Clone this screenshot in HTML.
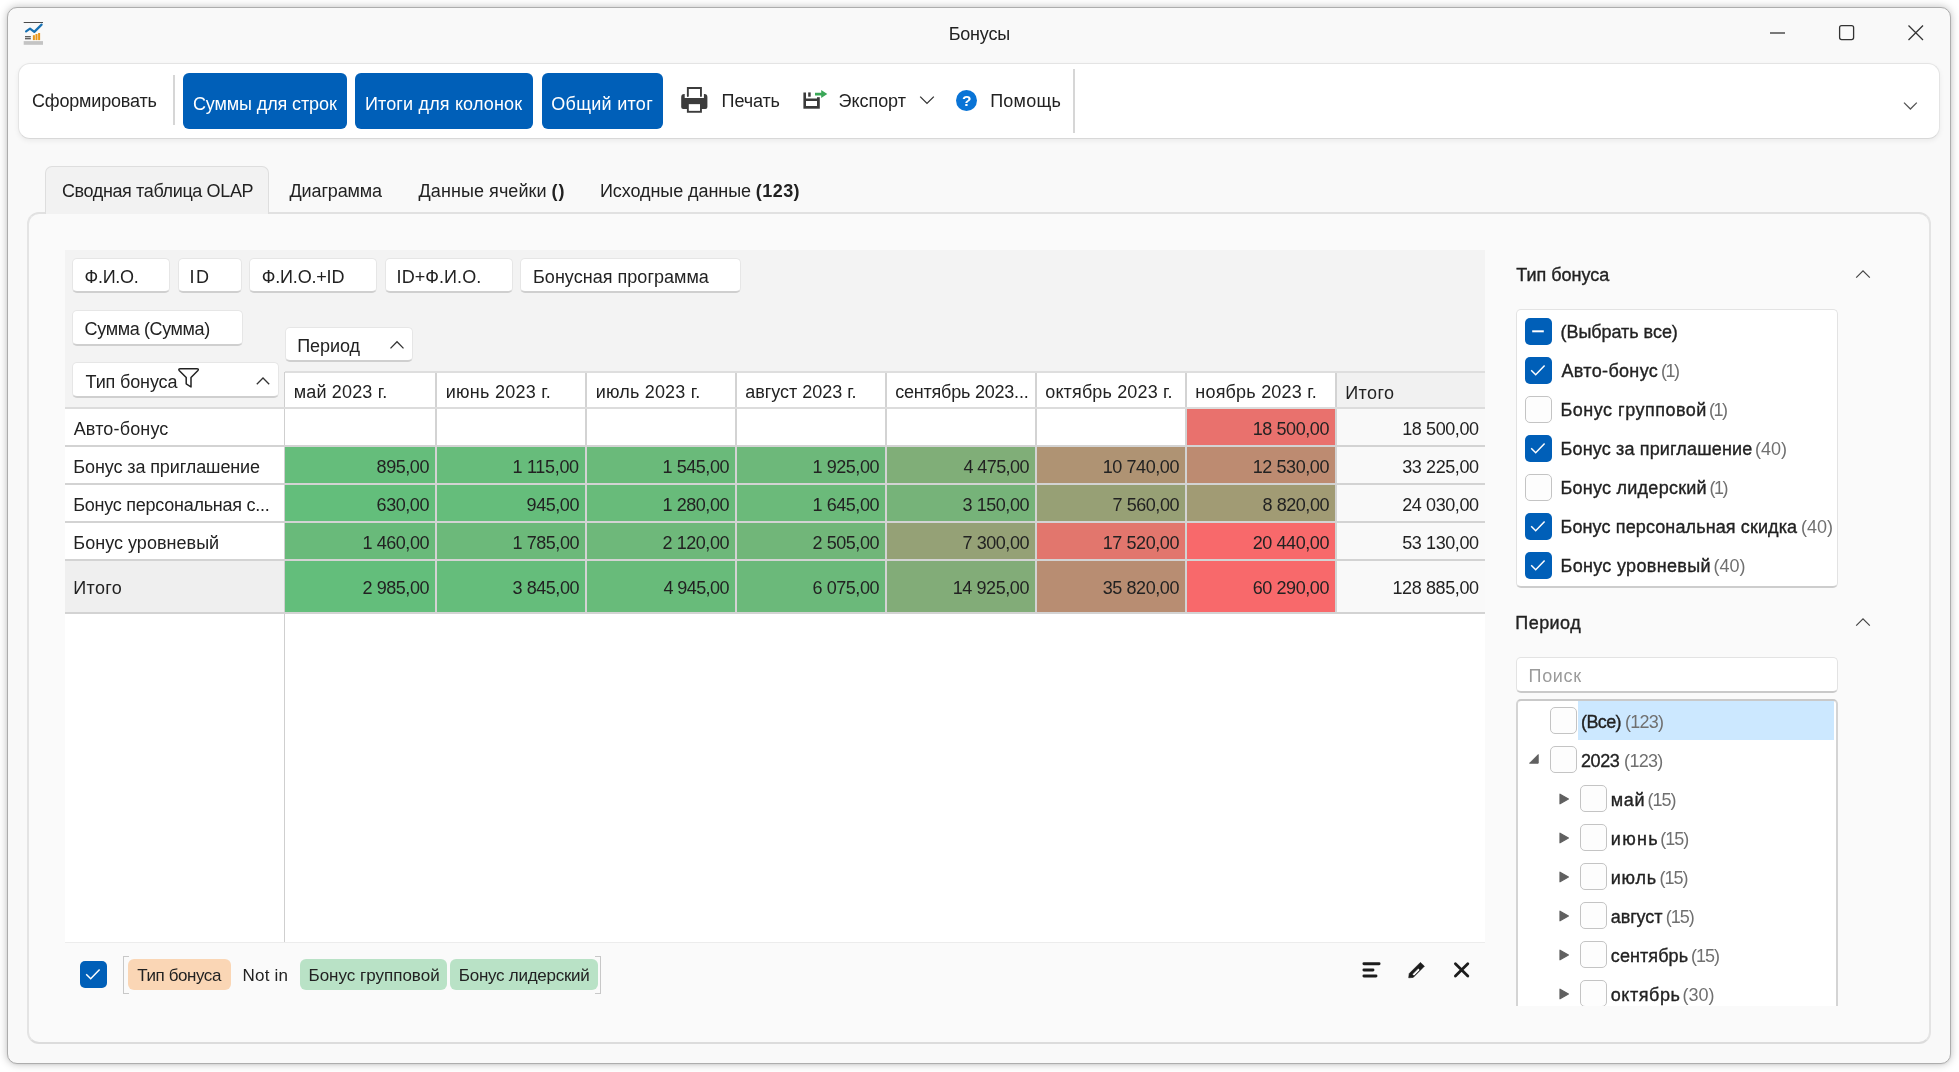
<!DOCTYPE html>
<html lang="ru">
<head>
<meta charset="utf-8">
<title>Бонусы</title>
<style>
html,body{margin:0;padding:0;}
body{width:1959px;height:1072px;background:#ffffff;position:relative;overflow:hidden;font-family:"Liberation Sans",sans-serif;}
div,span,svg{box-sizing:border-box;}
.t{position:absolute;white-space:pre;line-height:24px;height:24px;font-size:18px;color:#222;font-family:"Liberation Sans",sans-serif;}
#tx{position:absolute;left:0;top:0;width:1959px;height:1072px;will-change:transform;}
.chip{position:absolute;background:#fff;border:1px solid #e6e6e6;border-bottom:2px solid #cfcfcf;border-radius:5px;}
.cb{position:absolute;border-radius:5px;}
.cb.on{background:#005fb8;}
.cb.off{background:#fdfdfd;border:1px solid #c4c4c4;}
svg{position:absolute;overflow:visible;}
</style>
</head>
<body>
<div style="position:absolute;left:7px;top:7px;width:1944px;height:1057px;background:#f9f9f9;border:1px solid #adadad;border-radius:10px;box-shadow:0 0 9px rgba(0,0,0,.26),0 1px 2px rgba(0,0,0,.04);"></div>
<svg style="left:23px;top:21px" width="21" height="24" viewBox="0 0 21 24">
<rect x="0.7" y="1" width="19.3" height="1" fill="#4a4a4a"/>
<path d="M3.1 10.4 L7 7.7 L11.3 10.9 L18.6 3.6" fill="none" stroke="#1872b4" stroke-width="2.2" stroke-linecap="round" stroke-linejoin="round"/>
<rect x="2" y="15.2" width="5.8" height="1.1" fill="#3c3c3c"/><rect x="2" y="17.2" width="5.8" height="1.1" fill="#3c3c3c"/>
<rect x="9.9" y="14.2" width="2" height="4.9" fill="#e8971c"/><rect x="12.5" y="13" width="2" height="6.1" fill="#e8971c"/><rect x="15.1" y="12" width="2" height="7.1" fill="#e8971c"/>
<rect x="0.7" y="20.1" width="19.3" height="3.7" fill="#c4c4c4"/>
</svg>
<svg style="left:1765px;top:20px" width="170" height="26" viewBox="0 0 170 26"><g fill="none" stroke="#333" stroke-width="1.3"><path d="M5 13 H20"/><rect x="74.6" y="5.6" width="14" height="14" rx="2"/><path d="M143.5 5.5 L158 20 M158 5.5 L143.5 20"/></g></svg>
<div style="position:absolute;left:18px;top:63px;width:1922px;height:76px;background:#fff;border:1px solid #e4e4e4;border-bottom-color:#d8d8d8;border-radius:12px;box-shadow:0 2px 5px rgba(0,0,0,.06);"></div>
<div style="position:absolute;left:173px;top:75px;width:2px;height:50px;background:#d6d6d6;"></div>
<div style="position:absolute;left:183px;top:73px;width:164px;height:55.5px;background:#005fb8;border-radius:6px;"></div>
<div style="position:absolute;left:355px;top:73px;width:178px;height:55.5px;background:#005fb8;border-radius:6px;"></div>
<div style="position:absolute;left:541.5px;top:73px;width:121.5px;height:55.5px;background:#005fb8;border-radius:6px;"></div>
<svg style="left:681px;top:87px" width="27" height="26" viewBox="0 0 27 26">
<path d="M0.2 10 Q0.2 7.1 3.2 7.1 H3.7 V11.1 H22.9 V7.1 H23.4 Q26.4 7.1 26.4 10 V19.9 Q26.4 21.9 24.4 21.9 H2.2 Q0.2 21.9 0.2 19.9 Z" fill="#3c3c3c"/>
<path d="M6.85 9 V1 H19.95 V9" fill="none" stroke="#3c3c3c" stroke-width="1.9" stroke-linecap="round"/>
<rect x="6.85" y="16.2" width="13.1" height="8.6" fill="#fff" stroke="#3c3c3c" stroke-width="1.9"/>
</svg>
<svg style="left:803px;top:89px" width="26" height="21" viewBox="0 0 26 21">
<path d="M0.4 3.5 H16.8 V19.7 H0.4 Z" fill="#3a3a3a"/>
<rect x="3" y="3" width="11" height="6.5" fill="#fff"/><rect x="14" y="3" width="4" height="5.2" fill="#fff"/>
<rect x="5.2" y="3.4" width="2.5" height="4.3" fill="#3a3a3a"/>
<rect x="3" y="12" width="11" height="5" fill="#fff"/>
<path d="M12 3.7 H18.2 V0.9 L24.3 5 L18.2 9.1 V6.4 H12 Z" fill="#3aa757"/>
</svg>
<svg style="left:919px;top:95px" width="16" height="10" viewBox="0 0 16 10"><path d="M1.2 1.6 L8 8.4 L14.8 1.6" fill="none" stroke="#333" stroke-width="1.3"/></svg>
<div style="position:absolute;left:956px;top:89.5px;width:21px;height:21px;background:#0a74d6;border-radius:50%;"></div>
<div style="position:absolute;left:1073px;top:69px;width:2px;height:64px;background:#d6d6d6;"></div>
<svg style="left:1903px;top:101px" width="15" height="10" viewBox="0 0 15 10"><path d="M1 1.6 L7.4 8 L13.8 1.6" fill="none" stroke="#555" stroke-width="1.3"/></svg>
<div style="position:absolute;left:27px;top:212px;width:1904px;height:832px;background:#fafafa;border:2px solid #e4e4e4;border-top-color:#e1e1e1;border-bottom-color:#dcdcdc;border-radius:12px;"></div>
<div style="position:absolute;left:45px;top:166px;width:224px;height:48px;background:#f2f2f2;border:1.5px solid #dedede;border-bottom:none;border-radius:7px 7px 0 0;"></div>
<div style="position:absolute;left:65px;top:250px;width:1420px;height:692px;background:#f3f3f3;"></div>
<div style="position:absolute;left:65px;top:408px;width:1420px;height:534px;background:#fff;"></div>
<div class="chip" style="left:72px;top:258px;width:98px;height:35px"></div>
<div class="chip" style="left:178px;top:258px;width:64px;height:35px"></div>
<div class="chip" style="left:249px;top:258px;width:128px;height:35px"></div>
<div class="chip" style="left:385px;top:258px;width:128px;height:35px"></div>
<div class="chip" style="left:520px;top:258px;width:221px;height:35px"></div>
<div class="chip" style="left:72px;top:310px;width:171px;height:36px"></div>
<div class="chip" style="left:285px;top:327px;width:128px;height:35px"></div>
<div class="chip" style="left:72px;top:362px;width:207px;height:36px"></div>
<svg style="left:388.5px;top:339.5px" width="16" height="10" viewBox="0 0 16 10"><path d="M1.5 8.4 L8 1.8 L14.5 8.4" fill="none" stroke="#333" stroke-width="1.3"/></svg>
<svg style="left:254.5px;top:376px" width="16" height="10" viewBox="0 0 16 10"><path d="M1.8 8.2 L8 2 L14.2 8.2" fill="none" stroke="#333" stroke-width="1.3"/></svg>
<svg style="left:176px;top:366px" width="26" height="24" viewBox="176 366 26 24"><path d="M180.4 368.8 H196.8 Q199.4 368.8 197.7 370.8 L191 377.5 V387 L186.2 383.8 V377.5 L179.4 370.8 Q177.8 368.8 180.4 368.8 Z" fill="none" stroke="#222" stroke-width="1.5" stroke-linejoin="round"/></svg>
<div style="position:absolute;left:285px;top:372px;width:1051px;height:36px;background:#fff;"></div>
<div style="position:absolute;left:1336px;top:372px;width:149px;height:36px;background:#f1f1f1;"></div>
<div style="position:absolute;left:1337px;top:408px;width:148px;height:205px;background:#f9f9f9;"></div>
<div style="position:absolute;left:65px;top:561px;width:219px;height:51px;background:#efefef;"></div>
<div style="position:absolute;left:1186px;top:408px;width:150px;height:38px;background:#e9716d;"></div>
<div style="position:absolute;left:285px;top:446px;width:151px;height:38px;background:#65bd7b;"></div>
<div style="position:absolute;left:436px;top:446px;width:150px;height:38px;background:#67bc7b;"></div>
<div style="position:absolute;left:586px;top:446px;width:150px;height:38px;background:#6aba7a;"></div>
<div style="position:absolute;left:736px;top:446px;width:150px;height:38px;background:#6db87a;"></div>
<div style="position:absolute;left:886px;top:446px;width:150px;height:38px;background:#80ae78;"></div>
<div style="position:absolute;left:1036px;top:446px;width:150px;height:38px;background:#af9373;"></div>
<div style="position:absolute;left:1186px;top:446px;width:150px;height:38px;background:#bd8b71;"></div>
<div style="position:absolute;left:285px;top:484px;width:151px;height:38px;background:#63be7b;"></div>
<div style="position:absolute;left:436px;top:484px;width:150px;height:38px;background:#65bd7b;"></div>
<div style="position:absolute;left:586px;top:484px;width:150px;height:38px;background:#68bb7a;"></div>
<div style="position:absolute;left:736px;top:484px;width:150px;height:38px;background:#6bba7a;"></div>
<div style="position:absolute;left:886px;top:484px;width:150px;height:38px;background:#76b379;"></div>
<div style="position:absolute;left:1036px;top:484px;width:150px;height:38px;background:#97a075;"></div>
<div style="position:absolute;left:1186px;top:484px;width:150px;height:38px;background:#a19b74;"></div>
<div style="position:absolute;left:285px;top:522px;width:151px;height:38px;background:#69ba7a;"></div>
<div style="position:absolute;left:436px;top:522px;width:150px;height:38px;background:#6cb97a;"></div>
<div style="position:absolute;left:586px;top:522px;width:150px;height:38px;background:#6eb87a;"></div>
<div style="position:absolute;left:736px;top:522px;width:150px;height:38px;background:#71b679;"></div>
<div style="position:absolute;left:886px;top:522px;width:150px;height:38px;background:#95a176;"></div>
<div style="position:absolute;left:1036px;top:522px;width:150px;height:38px;background:#e2766d;"></div>
<div style="position:absolute;left:1186px;top:522px;width:150px;height:38px;background:#f8696b;"></div>
<div style="position:absolute;left:285px;top:560px;width:151px;height:53px;background:#63be7b;"></div>
<div style="position:absolute;left:436px;top:560px;width:150px;height:53px;background:#65bd7b;"></div>
<div style="position:absolute;left:586px;top:560px;width:150px;height:53px;background:#68bb7a;"></div>
<div style="position:absolute;left:736px;top:560px;width:150px;height:53px;background:#6bb97a;"></div>
<div style="position:absolute;left:886px;top:560px;width:150px;height:53px;background:#82ac78;"></div>
<div style="position:absolute;left:1036px;top:560px;width:150px;height:53px;background:#b88d72;"></div>
<div style="position:absolute;left:1186px;top:560px;width:150px;height:53px;background:#f8696b;"></div>
<div style="position:absolute;left:435px;top:372px;width:2px;height:241px;background:#d3d3d3;"></div>
<div style="position:absolute;left:585px;top:372px;width:2px;height:241px;background:#d3d3d3;"></div>
<div style="position:absolute;left:735px;top:372px;width:2px;height:241px;background:#d3d3d3;"></div>
<div style="position:absolute;left:885px;top:372px;width:2px;height:241px;background:#d3d3d3;"></div>
<div style="position:absolute;left:1035px;top:372px;width:2px;height:241px;background:#d3d3d3;"></div>
<div style="position:absolute;left:1185px;top:372px;width:2px;height:241px;background:#d3d3d3;"></div>
<div style="position:absolute;left:1335px;top:372px;width:2px;height:241px;background:#d3d3d3;"></div>
<div style="position:absolute;left:284px;top:372px;width:1px;height:570px;background:#cfcfcf;"></div>
<div style="position:absolute;left:285px;top:371px;width:1200px;height:2px;background:#dedede;"></div>
<div style="position:absolute;left:65px;top:407px;width:1420px;height:2px;background:#dcdcdc;"></div>
<div style="position:absolute;left:65px;top:445px;width:1420px;height:2px;background:#d3d3d3;"></div>
<div style="position:absolute;left:65px;top:483px;width:1420px;height:2px;background:#d3d3d3;"></div>
<div style="position:absolute;left:65px;top:521px;width:1420px;height:2px;background:#d3d3d3;"></div>
<div style="position:absolute;left:65px;top:559px;width:1420px;height:2px;background:#d3d3d3;"></div>
<div style="position:absolute;left:65px;top:612px;width:1420px;height:2px;background:#d3d3d3;"></div>
<div style="position:absolute;left:65px;top:941.5px;width:1420px;height:1px;background:#ececec;"></div>
<div class="cb on" style="left:80px;top:961px;width:27px;height:27px"></div>
<svg style="left:80px;top:961px" width="27" height="27" viewBox="0 0 27 27"><path d="M6.2 13.2 L10.7 17.7 L19.6 8.6" fill="none" stroke="#fff" stroke-width="1.5"/></svg>
<div style="position:absolute;left:123px;top:955.5px;width:6px;height:38px;border:1.5px solid #c8c8c8;border-right:none;"></div>
<div style="position:absolute;left:595.4px;top:955.5px;width:6px;height:38px;border:1.5px solid #c8c8c8;border-left:none;"></div>
<div style="position:absolute;left:128px;top:959px;width:103px;height:31px;background:#fad6b5;border-radius:6px;"></div>
<div style="position:absolute;left:300px;top:959px;width:146.6px;height:31px;background:#b9e2c6;border-radius:6px;"></div>
<div style="position:absolute;left:450.2px;top:959px;width:147.4px;height:31px;background:#b9e2c6;border-radius:6px;"></div>
<svg style="left:1360px;top:960px" width="24" height="20" viewBox="1360 960 24 20"><g fill="none" stroke="#1c1c1c" stroke-width="2.9" stroke-linecap="round"><path d="M1363.9 963.8 H1379.1 M1363.9 970 H1373 M1363.9 976 H1376"/></g></svg>
<svg style="left:1405px;top:960px" width="24" height="20" viewBox="1405 960 24 20"><path d="M1408.7 977.8 L1409.2 973.6 L1420.4 962.4 L1424.4 966.2 L1413.2 977.4 Z M1412.3 974.3 L1414 976 L1420 970 L1418.3 968.3 Z" fill="#1c1c1c" fill-rule="evenodd" stroke="#1c1c1c" stroke-width="0.6" stroke-linejoin="round"/></svg>
<svg style="left:1450px;top:960px" width="24" height="20" viewBox="1450 960 24 20"><path d="M1455.4 963.8 L1467.8 976 M1467.8 963.8 L1455.4 976" fill="none" stroke="#1c1c1c" stroke-width="2.8" stroke-linecap="round"/></svg>
<svg style="left:1855px;top:268.6px" width="16" height="10" viewBox="0 0 16 10"><path d="M1.2 8.6 L8 1.8 L14.8 8.6" fill="none" stroke="#444" stroke-width="1.2"/></svg>
<div style="position:absolute;left:1516px;top:309px;width:322px;height:278.6px;background:#fff;border:1px solid #e3e3e3;border-bottom:2px solid #cdcdcd;border-radius:5px;"></div>
<div class="cb on" style="left:1525px;top:317.79999999999995px;width:27px;height:27px"></div>
<svg style="left:1525px;top:317.79999999999995px" width="27" height="27" viewBox="0 0 27 27"><path d="M7.2 13.3 H18.8" fill="none" stroke="#fff" stroke-width="2"/></svg>
<div class="cb on" style="left:1525px;top:356.79999999999995px;width:27px;height:27px"></div>
<svg style="left:1525px;top:356.79999999999995px" width="27" height="27" viewBox="0 0 27 27"><path d="M6.2 13.2 L10.7 17.7 L19.6 8.6" fill="none" stroke="#fff" stroke-width="1.5"/></svg>
<div class="cb off" style="left:1525px;top:395.79999999999995px;width:27px;height:27px"></div>
<div class="cb on" style="left:1525px;top:434.79999999999995px;width:27px;height:27px"></div>
<svg style="left:1525px;top:434.79999999999995px" width="27" height="27" viewBox="0 0 27 27"><path d="M6.2 13.2 L10.7 17.7 L19.6 8.6" fill="none" stroke="#fff" stroke-width="1.5"/></svg>
<div class="cb off" style="left:1525px;top:473.79999999999995px;width:27px;height:27px"></div>
<div class="cb on" style="left:1525px;top:512.8px;width:27px;height:27px"></div>
<svg style="left:1525px;top:512.8px" width="27" height="27" viewBox="0 0 27 27"><path d="M6.2 13.2 L10.7 17.7 L19.6 8.6" fill="none" stroke="#fff" stroke-width="1.5"/></svg>
<div class="cb on" style="left:1525px;top:551.8px;width:27px;height:27px"></div>
<svg style="left:1525px;top:551.8px" width="27" height="27" viewBox="0 0 27 27"><path d="M6.2 13.2 L10.7 17.7 L19.6 8.6" fill="none" stroke="#fff" stroke-width="1.5"/></svg>
<svg style="left:1855px;top:616.6px" width="16" height="10" viewBox="0 0 16 10"><path d="M1.2 8.6 L8 1.8 L14.8 8.6" fill="none" stroke="#444" stroke-width="1.2"/></svg>
<div style="position:absolute;left:1516px;top:657px;width:322px;height:35.6px;background:#fff;border:1px solid #e3e3e3;border-bottom:2px solid #c9c9c9;border-radius:5px;"></div>
<div style="position:absolute;left:1516px;top:699px;width:322px;height:307px;background:#fff;border:2px solid #d4d4d4;border-top-color:#c9c9c9;border-bottom:none;border-radius:5px 5px 0 0;"></div>
<div style="position:absolute;left:1578px;top:701px;width:256px;height:39px;background:#cce8ff;"></div>
<div class="cb off" style="left:1550px;top:707px;width:27px;height:27px"></div>
<div class="cb off" style="left:1550px;top:746px;width:27px;height:27px"></div>
<svg style="left:1527.6px;top:753.4px" width="11" height="11" viewBox="0 0 11 11"><path d="M10.2 1.6 V10.2 H1.6 Z" fill="#606060" stroke="#606060" stroke-width="1" stroke-linejoin="round"/></svg>
<svg style="left:1558.6px;top:792.5px" width="11" height="12" viewBox="0 0 11 12"><path d="M1 1.2 L9.4 6 L1 10.8 Z" fill="#606060" stroke="#606060" stroke-width="1.2" stroke-linejoin="round"/></svg>
<div class="cb off" style="left:1580px;top:785px;width:27px;height:27px"></div>
<svg style="left:1558.6px;top:831.5px" width="11" height="12" viewBox="0 0 11 12"><path d="M1 1.2 L9.4 6 L1 10.8 Z" fill="#606060" stroke="#606060" stroke-width="1.2" stroke-linejoin="round"/></svg>
<div class="cb off" style="left:1580px;top:824px;width:27px;height:27px"></div>
<svg style="left:1558.6px;top:870.5px" width="11" height="12" viewBox="0 0 11 12"><path d="M1 1.2 L9.4 6 L1 10.8 Z" fill="#606060" stroke="#606060" stroke-width="1.2" stroke-linejoin="round"/></svg>
<div class="cb off" style="left:1580px;top:863px;width:27px;height:27px"></div>
<svg style="left:1558.6px;top:909.5px" width="11" height="12" viewBox="0 0 11 12"><path d="M1 1.2 L9.4 6 L1 10.8 Z" fill="#606060" stroke="#606060" stroke-width="1.2" stroke-linejoin="round"/></svg>
<div class="cb off" style="left:1580px;top:902px;width:27px;height:27px"></div>
<svg style="left:1558.6px;top:948.5px" width="11" height="12" viewBox="0 0 11 12"><path d="M1 1.2 L9.4 6 L1 10.8 Z" fill="#606060" stroke="#606060" stroke-width="1.2" stroke-linejoin="round"/></svg>
<div class="cb off" style="left:1580px;top:941px;width:27px;height:27px"></div>
<svg style="left:1558.6px;top:987.5px" width="11" height="12" viewBox="0 0 11 12"><path d="M1 1.2 L9.4 6 L1 10.8 Z" fill="#606060" stroke="#606060" stroke-width="1.2" stroke-linejoin="round"/></svg>
<div class="cb off" style="left:1580px;top:980px;width:27px;height:27px"></div>
<div style="position:absolute;left:1510px;top:1006px;width:335px;height:34px;background:#fafafa;"></div>
<div id="tx">
<span class="t" style="left:948.70px;top:22.00px;letter-spacing:-0.200px;">Бонусы</span>
<span class="t" style="left:32.00px;top:89.00px;letter-spacing:-0.182px;">Сформировать</span>
<span class="t" style="left:192.90px;top:92.00px;color:#fff;letter-spacing:-0.107px;">Суммы для строк</span>
<span class="t" style="left:364.90px;top:92.00px;color:#fff;letter-spacing:0.162px;">Итоги для колонок</span>
<span class="t" style="left:551.30px;top:92.00px;color:#fff;letter-spacing:0.278px;">Общий итог</span>
<span class="t" style="left:721.60px;top:89.00px;letter-spacing:-0.120px;">Печать</span>
<span class="t" style="left:838.60px;top:89.00px;letter-spacing:-0.050px;">Экспорт</span>
<span class="t" style="left:962.00px;top:88.50px;font-size:15.5px;color:#fff;font-weight:700;">?</span>
<span class="t" style="left:990.20px;top:89.00px;letter-spacing:0.220px;">Помощь</span>
<span class="t" style="left:61.90px;top:179.00px;letter-spacing:-0.368px;">Сводная таблица OLAP</span>
<span class="t" style="left:289.50px;top:179.00px;letter-spacing:-0.125px;">Диаграмма</span>
<span class="t" style="left:418.60px;top:179.00px;letter-spacing:0.067px;">Данные ячейки</span>
<span class="t" style="left:551.50px;top:179.00px;font-weight:700;letter-spacing:1.000px;">()</span>
<span class="t" style="left:599.90px;top:179.00px;letter-spacing:-0.064px;">Исходные данные</span>
<span class="t" style="left:755.70px;top:179.00px;font-weight:700;letter-spacing:0.475px;">(123)</span>
<span class="t" style="left:84.60px;top:265.00px;letter-spacing:-0.300px;">Ф.И.О.</span>
<span class="t" style="left:189.60px;top:265.00px;letter-spacing:1.500px;">ID</span>
<span class="t" style="left:261.80px;top:265.00px;letter-spacing:-0.188px;">Ф.И.О.+ID</span>
<span class="t" style="left:396.60px;top:265.00px;letter-spacing:0.062px;">ID+Ф.И.О.</span>
<span class="t" style="left:533.00px;top:265.00px;letter-spacing:0.029px;">Бонусная программа</span>
<span class="t" style="left:84.60px;top:317.00px;letter-spacing:-0.375px;">Сумма (Сумма)</span>
<span class="t" style="left:297.20px;top:334.00px;letter-spacing:-0.040px;">Период</span>
<span class="t" style="left:85.60px;top:370.00px;letter-spacing:-0.133px;">Тип бонуса</span>
<span class="t" style="left:1252.65px;top:417.00px;letter-spacing:-0.406px;">18 500,00</span>
<span class="t" style="left:1402.25px;top:417.00px;letter-spacing:-0.406px;">18 500,00</span>
<span class="t" style="left:376.55px;top:455.00px;letter-spacing:-0.430px;">895,00</span>
<span class="t" style="left:512.50px;top:455.00px;letter-spacing:-0.300px;">1 115,00</span>
<span class="t" style="left:662.50px;top:455.00px;letter-spacing:-0.443px;">1 545,00</span>
<span class="t" style="left:812.50px;top:455.00px;letter-spacing:-0.443px;">1 925,00</span>
<span class="t" style="left:963.50px;top:455.00px;letter-spacing:-0.586px;">4 475,00</span>
<span class="t" style="left:1102.65px;top:455.00px;letter-spacing:-0.406px;">10 740,00</span>
<span class="t" style="left:1252.65px;top:455.00px;letter-spacing:-0.406px;">12 530,00</span>
<span class="t" style="left:1402.25px;top:455.00px;letter-spacing:-0.406px;">33 225,00</span>
<span class="t" style="left:376.55px;top:493.00px;letter-spacing:-0.430px;">630,00</span>
<span class="t" style="left:526.55px;top:493.00px;letter-spacing:-0.430px;">945,00</span>
<span class="t" style="left:662.50px;top:493.00px;letter-spacing:-0.443px;">1 280,00</span>
<span class="t" style="left:812.50px;top:493.00px;letter-spacing:-0.443px;">1 645,00</span>
<span class="t" style="left:962.50px;top:493.00px;letter-spacing:-0.443px;">3 150,00</span>
<span class="t" style="left:1112.50px;top:493.00px;letter-spacing:-0.443px;">7 560,00</span>
<span class="t" style="left:1262.50px;top:493.00px;letter-spacing:-0.443px;">8 820,00</span>
<span class="t" style="left:1402.25px;top:493.00px;letter-spacing:-0.406px;">24 030,00</span>
<span class="t" style="left:362.50px;top:531.00px;letter-spacing:-0.443px;">1 460,00</span>
<span class="t" style="left:512.50px;top:531.00px;letter-spacing:-0.443px;">1 785,00</span>
<span class="t" style="left:662.50px;top:531.00px;letter-spacing:-0.443px;">2 120,00</span>
<span class="t" style="left:812.50px;top:531.00px;letter-spacing:-0.443px;">2 505,00</span>
<span class="t" style="left:962.50px;top:531.00px;letter-spacing:-0.443px;">7 300,00</span>
<span class="t" style="left:1102.65px;top:531.00px;letter-spacing:-0.406px;">17 520,00</span>
<span class="t" style="left:1252.65px;top:531.00px;letter-spacing:-0.406px;">20 440,00</span>
<span class="t" style="left:1402.25px;top:531.00px;letter-spacing:-0.406px;">53 130,00</span>
<span class="t" style="left:362.50px;top:576.00px;letter-spacing:-0.443px;">2 985,00</span>
<span class="t" style="left:512.50px;top:576.00px;letter-spacing:-0.443px;">3 845,00</span>
<span class="t" style="left:663.50px;top:576.00px;letter-spacing:-0.586px;">4 945,00</span>
<span class="t" style="left:812.50px;top:576.00px;letter-spacing:-0.443px;">6 075,00</span>
<span class="t" style="left:952.65px;top:576.00px;letter-spacing:-0.406px;">14 925,00</span>
<span class="t" style="left:1102.65px;top:576.00px;letter-spacing:-0.406px;">35 820,00</span>
<span class="t" style="left:1252.65px;top:576.00px;letter-spacing:-0.406px;">60 290,00</span>
<span class="t" style="left:1392.40px;top:576.00px;letter-spacing:-0.378px;">128 885,00</span>
<span class="t" style="left:293.70px;top:380.00px;letter-spacing:0.170px;">май 2023 г.</span>
<span class="t" style="left:445.75px;top:380.00px;letter-spacing:0.255px;">июнь 2023 г.</span>
<span class="t" style="left:595.75px;top:380.00px;letter-spacing:0.182px;">июль 2023 г.</span>
<span class="t" style="left:745.25px;top:380.00px;letter-spacing:-0.019px;">август 2023 г.</span>
<span class="t" style="left:895.25px;top:380.00px;letter-spacing:-0.217px;">сентябрь 2023...</span>
<span class="t" style="left:1045.25px;top:380.00px;letter-spacing:0.143px;">октябрь 2023 г.</span>
<span class="t" style="left:1195.25px;top:380.00px;letter-spacing:0.212px;">ноябрь 2023 г.</span>
<span class="t" style="left:1345.25px;top:381.00px;letter-spacing:0.400px;">Итого</span>
<span class="t" style="left:73.70px;top:417.00px;letter-spacing:0.156px;">Авто-бонус</span>
<span class="t" style="left:73.30px;top:455.00px;letter-spacing:-0.105px;">Бонус за приглашение</span>
<span class="t" style="left:73.30px;top:493.00px;letter-spacing:-0.259px;">Бонус персональная с...</span>
<span class="t" style="left:73.30px;top:531.00px;letter-spacing:0.029px;">Бонус уровневый</span>
<span class="t" style="left:73.30px;top:576.00px;letter-spacing:0.350px;">Итого</span>
<span class="t" style="left:137.30px;top:963.50px;font-size:17px;letter-spacing:-0.422px;">Тип бонуса</span>
<span class="t" style="left:242.60px;top:963.50px;font-size:17px;letter-spacing:0.180px;">Not in</span>
<span class="t" style="left:308.50px;top:963.50px;font-size:17px;">Бонус групповой</span>
<span class="t" style="left:458.80px;top:963.50px;font-size:17px;letter-spacing:-0.264px;">Бонус лидерский</span>
<span class="t" style="left:1516.30px;top:263.00px;-webkit-text-stroke:0.35px #222;">Тип бонуса</span>
<span class="t" style="left:1560.50px;top:320.00px;letter-spacing:-0.042px;-webkit-text-stroke:0.35px #222;">(Выбрать все)</span>
<span class="t" style="left:1561.50px;top:359.00px;letter-spacing:0.333px;-webkit-text-stroke:0.35px #222;">Авто-бонус</span>
<span class="t" style="left:1661.10px;top:359.00px;color:#707070;letter-spacing:-1.500px;">(1)</span>
<span class="t" style="left:1560.50px;top:398.00px;letter-spacing:0.500px;-webkit-text-stroke:0.35px #222;">Бонус групповой</span>
<span class="t" style="left:1709.10px;top:398.00px;color:#707070;letter-spacing:-1.500px;">(1)</span>
<span class="t" style="left:1560.50px;top:437.00px;letter-spacing:0.158px;-webkit-text-stroke:0.35px #222;">Бонус за приглашение</span>
<span class="t" style="left:1755.10px;top:437.00px;color:#707070;">(40)</span>
<span class="t" style="left:1560.50px;top:476.00px;letter-spacing:0.250px;-webkit-text-stroke:0.35px #222;">Бонус лидерский</span>
<span class="t" style="left:1709.60px;top:476.00px;color:#707070;letter-spacing:-1.500px;">(1)</span>
<span class="t" style="left:1560.50px;top:515.00px;letter-spacing:0.117px;-webkit-text-stroke:0.35px #222;">Бонус персональная скидка</span>
<span class="t" style="left:1800.90px;top:515.00px;color:#707070;">(40)</span>
<span class="t" style="left:1560.50px;top:554.00px;letter-spacing:0.321px;-webkit-text-stroke:0.35px #222;">Бонус уровневый</span>
<span class="t" style="left:1713.60px;top:554.00px;color:#707070;">(40)</span>
<span class="t" style="left:1515.30px;top:611.00px;letter-spacing:0.440px;-webkit-text-stroke:0.35px #222;">Период</span>
<span class="t" style="left:1528.60px;top:664.00px;color:#9b9b9b;letter-spacing:0.650px;">Поиск</span>
<span class="t" style="left:1581.00px;top:710.00px;letter-spacing:-0.600px;-webkit-text-stroke:0.35px #222;">(Все)</span>
<span class="t" style="left:1624.90px;top:710.00px;color:#707070;letter-spacing:-0.700px;">(123)</span>
<span class="t" style="left:1581.00px;top:749.00px;letter-spacing:-0.400px;-webkit-text-stroke:0.35px #222;">2023</span>
<span class="t" style="left:1624.10px;top:749.00px;color:#707070;letter-spacing:-0.700px;">(123)</span>
<span class="t" style="left:1610.80px;top:788.00px;letter-spacing:0.600px;-webkit-text-stroke:0.35px #222;">май</span>
<span class="t" style="left:1647.50px;top:788.00px;color:#707070;letter-spacing:-1.000px;">(15)</span>
<span class="t" style="left:1610.80px;top:827.00px;letter-spacing:1.300px;-webkit-text-stroke:0.35px #222;">июнь</span>
<span class="t" style="left:1660.20px;top:827.00px;color:#707070;letter-spacing:-1.000px;">(15)</span>
<span class="t" style="left:1610.80px;top:866.00px;letter-spacing:0.767px;-webkit-text-stroke:0.35px #222;">июль</span>
<span class="t" style="left:1659.60px;top:866.00px;color:#707070;letter-spacing:-1.000px;">(15)</span>
<span class="t" style="left:1610.80px;top:905.00px;letter-spacing:-0.120px;-webkit-text-stroke:0.35px #222;">август</span>
<span class="t" style="left:1665.70px;top:905.00px;color:#707070;letter-spacing:-1.000px;">(15)</span>
<span class="t" style="left:1610.80px;top:944.00px;letter-spacing:0.086px;-webkit-text-stroke:0.35px #222;">сентябрь</span>
<span class="t" style="left:1690.90px;top:944.00px;color:#707070;letter-spacing:-1.000px;">(15)</span>
<span class="t" style="left:1610.80px;top:983.00px;letter-spacing:0.550px;-webkit-text-stroke:0.35px #222;">октябрь</span>
<span class="t" style="left:1682.60px;top:983.00px;color:#707070;letter-spacing:-0.067px;">(30)</span>
</div>
</body>
</html>
